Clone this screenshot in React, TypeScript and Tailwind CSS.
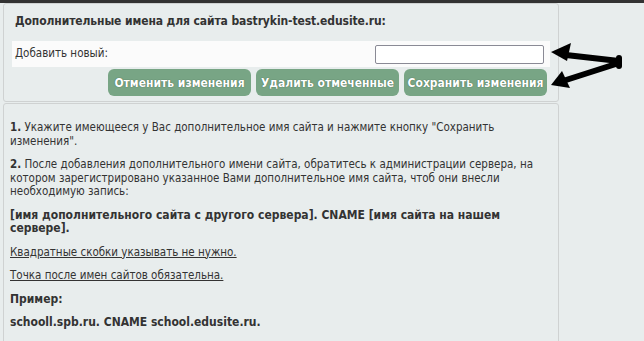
import React from "react";

const FONT = { fontFamily: '"DejaVu Sans Condensed", "DejaVu Sans", Verdana, sans-serif' };

function Arrows() {
  return (
    <svg
      className="absolute left-0 top-0 pointer-events-none"
      width={644}
      height={341}
      viewBox="0 0 644 341"
    >
      <g stroke="#000" strokeWidth={6} strokeLinecap="round" fill="none">
        <line x1={619} y1={61} x2={566} y2={55} />
        <line x1={619} y1={63} x2={566} y2={80} />
        <line x1={619} y1={58} x2={619} y2={66} />
      </g>
      <polygon points="551,52 571,43 567,61" fill="#000" />
      <polygon points="551,85 562,71 570,88" fill="#000" />
    </svg>
  );
}

export default function App() {
  return (
    <div
      className="relative w-[644px] h-[341px] overflow-hidden bg-[#e8eded] text-[#333]"
      style={FONT}
    >
      <div className="h-[3px] bg-[#333]" />
      <div className="w-[556px] ml-[3px] flex flex-col gap-[1px]">
        {/* panel: additional names */}
        <div className="h-[99px] border border-[#cfd2d2] rounded-[3px] px-[8px] pt-[9px]">
          <div className="text-[12px] font-bold leading-[16px] tracking-[-0.1px] pl-[3px]">
            Дополнительные имена для сайта bastrykin-test.edusite.ru:
          </div>
          <div className="mt-[12px] h-[26px] bg-[#fbfbfb] flex items-center justify-between pl-[3px] pr-[6px]">
            <span className="text-[11.5px]">Добавить новый:</span>
            <input
              className="w-[169px] h-[19px] bg-white border border-[#8a8a95] rounded-[2px] outline-none"
              type="text"
            />
          </div>
          <div className="mt-[2px] flex justify-end gap-[5px] pr-[3px]">
            {["Отменить изменения", "Удалить отмеченные", "Сохранить изменения"].map((b) => (
              <button
                key={b}
                className="w-[143px] h-[27px] rounded-[6px] bg-[#78a585] text-white text-[12px] font-bold whitespace-nowrap [text-shadow:0_0_1px_#2d4a36]"
              >
                {b}
              </button>
            ))}
          </div>
        </div>

        {/* panel: help text */}
        <div className="h-[240px] border border-[#cfd2d2] rounded-t-[3px] pl-[6px] pr-[8px] pt-[17px] text-[11.5px] leading-[13.5px] flex flex-col gap-[10px]">
          <p>
            <b>1.</b> Укажите имеющееся у Вас дополнительное имя сайта и нажмите кнопку "Сохранить
            изменения".
          </p>
          <p>
            <b>2.</b> После добавления дополнительного имени сайта, обратитесь к администрации сервера, на
            котором зарегистрировано указанное Вами дополнительное имя сайта, чтоб они внесли
            необходимую запись:
          </p>
          <p className="font-bold text-[12px]">
            [имя дополнительного сайта с другого сервера]. CNAME [имя сайта на нашем сервере].
          </p>
          <p className="underline">Квадратные скобки указывать не нужно.</p>
          <p className="underline">Точка после имен сайтов обязательна.</p>
          <p className="font-bold text-[12px]">Пример:</p>
          <p className="font-bold text-[12px]">schooll.spb.ru. CNAME school.edusite.ru.</p>
        </div>
      </div>
      <Arrows />
    </div>
  );
}
